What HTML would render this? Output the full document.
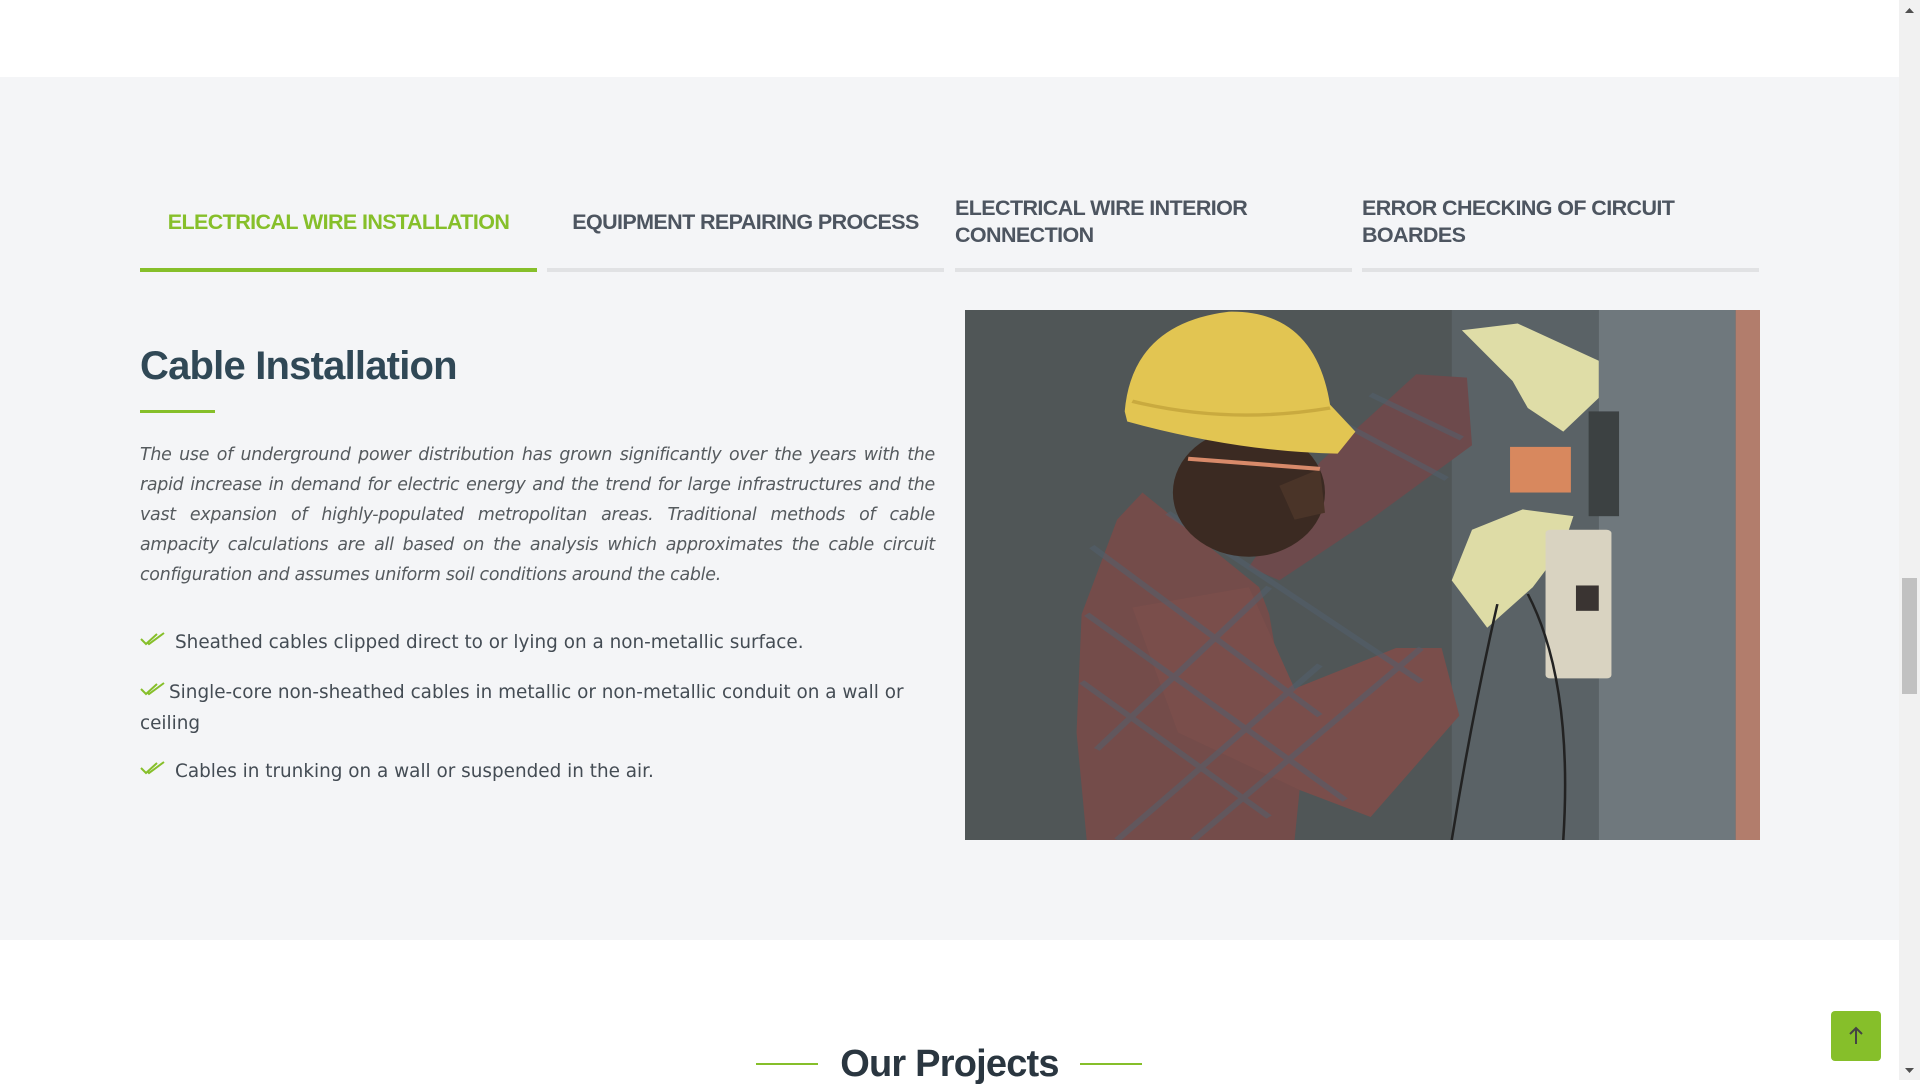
<!DOCTYPE html>
<html><head><meta charset="utf-8">
<style>
html,body{margin:0;padding:0;width:1920px;height:1080px;overflow:hidden;background:#fff;font-family:"Liberation Sans",sans-serif;}
.sec{position:absolute;left:0;top:77px;width:1899px;height:863px;background:#f4f5f7;}
.tab{position:absolute;top:182px;height:90px;width:397px;}
.tab .t{position:absolute;left:0;right:0;top:0;height:80px;display:flex;align-items:center;font-weight:bold;font-size:21.5px;line-height:27px;color:#4d5560;letter-spacing:-0.6px;}
.tab .u{position:absolute;left:0;right:0;bottom:0;height:4px;background:#e1e2e4;}
h2{position:absolute;left:140px;top:344px;margin:0;font-size:40px;font-weight:bold;color:#304856;letter-spacing:-0.8px;}
.gl{position:absolute;left:140px;top:410px;width:75px;height:3px;background:#86bf2a;}
.p{position:absolute;left:140px;top:440px;width:795px;font-style:italic;line-height:30px;color:#555a5e;text-align:justify;font-family:"DejaVu Sans",sans-serif;font-size:17.4px;letter-spacing:-0.25px;}
.li{position:absolute;left:140px;width:800px;font-size:18.4px;line-height:31px;color:#444c54;font-family:"DejaVu Sans",sans-serif;letter-spacing:0px;}
.chk{display:inline-block;width:25px;height:14px;vertical-align:2px;margin-right:10px;}
.sb{position:absolute;left:1899px;top:0;width:21px;height:1080px;background:#f1f1f1;}
</style></head><body>
<div class="sec"></div>
<div class="tab" style="left:140px"><div class="t" style="color:#86bf2a;justify-content:center">ELECTRICAL WIRE INSTALLATION</div><div class="u" style="background:#86bf2a"></div></div>
<div class="tab" style="left:547px"><div class="t" style="justify-content:center">EQUIPMENT REPAIRING PROCESS</div><div class="u"></div></div>
<div class="tab" style="left:955px"><div class="t">ELECTRICAL WIRE INTERIOR<br>CONNECTION</div><div class="u"></div></div>
<div class="tab" style="left:1362px"><div class="t">ERROR CHECKING OF CIRCUIT<br>BOARDES</div><div class="u"></div></div>
<h2>Cable Installation</h2>
<div class="gl"></div>
<div class="p">The use of underground power distribution has grown significantly over the years with the rapid increase in demand for electric energy and the trend for large infrastructures and the vast expansion of highly-populated metropolitan areas. Traditional methods of cable ampacity calculations are all based on the analysis which approximates the cable circuit configuration and assumes uniform soil conditions around the cable.</div>
<svg width="0" height="0" style="position:absolute"><defs><symbol id="ck" viewBox="0 0 25 14"><path d="M1 7l5 5L17 2M8 11l1 1L24 1" fill="none" stroke="#86bf2a" stroke-width="2"/></symbol></defs></svg>
<div class="li" style="top:627px"><svg class="chk"><use href="#ck"/></svg>Sheathed cables clipped direct to or lying on a non-metallic surface.</div>
<div class="li" style="top:677px"><svg class="chk" style="margin-right:4px"><use href="#ck"/></svg>Single-core non-sheathed cables in metallic or non-metallic conduit on a wall or ceiling</div>
<div class="li" style="top:756px"><svg class="chk"><use href="#ck"/></svg>Cables in trunking on a wall or suspended in the air.</div>
<svg style="position:absolute;left:965px;top:310px" width="795" height="530" viewBox="0 0 1568 1568" preserveAspectRatio="none">
<rect width="1568" height="1568" fill="#4c5252"/>
<rect x="0" y="0" width="960" height="1568" fill="#505657"/>
<rect x="960" y="0" width="290" height="1568" fill="#5a6266"/>
<rect x="1250" y="0" width="270" height="1568" fill="#6f787d"/>
<rect x="1520" y="0" width="48" height="1568" fill="#b27d6c"/>
<path d="M350 540 L300 620 L230 900 L220 1250 L240 1568 L650 1568 L660 1420 L600 900 L580 820 Z" fill="#744c4a"/>
<path d="M560 760 L700 450 L890 190 L990 200 L1000 400 L800 620 L620 800 Z" fill="#6d4a4c"/>
<path d="M330 880 L560 820 L650 1120 L850 1000 L940 1000 L975 1200 L800 1500 L660 1420 L420 1250 Z" fill="#7a4e4b"/>
<g stroke="#52606e" stroke-width="14" opacity=".55"><path d="M250 700L700 1200M240 900L750 1450M230 1100L600 1500M400 600L900 1100M300 1568L700 1050M450 1568L900 1000M260 1300L600 820M700 300L950 500M800 250L980 380"/></g>
<ellipse cx="560" cy="540" rx="150" ry="190" fill="#3b2a22"/>
<path d="M620 520 L700 470 L710 600 L650 620Z" fill="#4a3428"/>
<path d="M440 440 L700 470" stroke="#d88a6a" stroke-width="12"/>
<path d="M315 300 Q330 40 520 5 Q690 0 720 280 L770 360 L735 425 Q540 420 320 330Z" fill="#e2c552"/>
<path d="M330 270 Q520 340 720 290" stroke="#c9aa3f" stroke-width="10" fill="none"/>
<path d="M980 60 L1090 40 L1250 150 L1250 260 L1180 360 L1110 290 L1080 210Z" fill="#dfdda7"/>
<path d="M960 800 L1000 650 L1100 590 L1200 610 L1180 700 L1120 820 L1030 940Z" fill="#dedca6"/>
<rect x="1230" y="300" width="60" height="310" fill="#3c4142"/>
<rect x="1075" y="405" width="120" height="135" fill="#d8885e"/>
<rect x="1145" y="650" width="130" height="440" rx="10" fill="#d9d3c1"/>
<rect x="1205" y="815" width="45" height="75" fill="#3a3432"/>
<path d="M1050 870 Q1000 1200 960 1568 M1110 840 Q1200 1100 1180 1568" stroke="#222" stroke-width="5" fill="none"/>
</svg>
<div style="position:absolute;left:756px;top:1063px;width:62px;height:2px;background:#86bf2a"></div>
<div style="position:absolute;left:1080px;top:1063px;width:62px;height:2px;background:#86bf2a"></div>
<div style="position:absolute;left:0;width:1899px;top:1043px;text-align:center;font-size:38px;font-weight:bold;color:#2a3640;letter-spacing:-0.8px">Our Projects</div>
<div style="position:absolute;left:1831px;top:1011px;width:50px;height:50px;border-radius:4px;background:#86bf2a"><svg width="50" height="50"><path d="M25 33V17M19 23l6-6 6 6" stroke="#444" stroke-width="2" fill="none"/></svg></div>
<div class="sb"><div style="position:absolute;left:3px;top:578px;width:15px;height:116px;background:#c1c1c1"></div>
<svg width="21" height="1080" style="position:absolute;left:0;top:0"><path d="M6 13l4.5-5 4.5 5z M6 1068l4.5 5 4.5-5z" fill="#505050"/></svg></div>
</body></html>
